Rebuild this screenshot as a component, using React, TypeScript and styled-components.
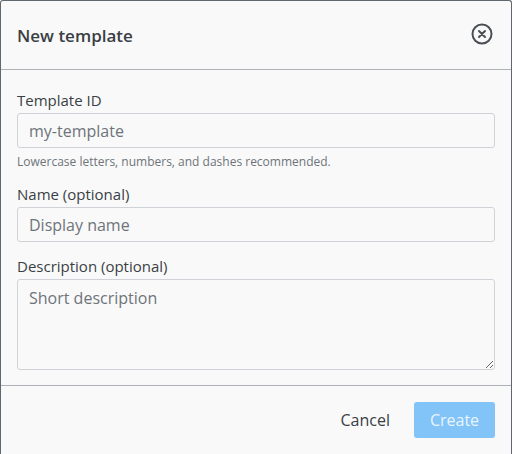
import styled, { createGlobalStyle } from 'styled-components';

const Global = createGlobalStyle`
  body { margin: 0; background: #f9f9f9; font-family: "Open Sans", "Noto Sans", sans-serif; }
`;

const Dialog = styled.div`
  width: 512px;
  height: 454px;
  box-sizing: border-box;
  border: 1px solid #5f6770;
  border-bottom: none;
  border-radius: 3px 3px 0 0;
  background: #f9f9f9;
  display: flex;
  flex-direction: column;
`;

const Header = styled.div`
  height: 71px;
  display: flex;
  align-items: center;
  justify-content: space-between;
  padding: 0 16px 0 16px;
  border-bottom: 1px solid #aeb2b8;
`;

const Title = styled.h2`
  margin: 0;
  font-size: 17px;
  font-weight: 600;
  color: #3a3f45;
`;

const CloseButton = styled.button`
  background: none;
  border: none;
  padding: 0;
  width: 26px;
  height: 26px;
  display: flex;
  align-items: center;
  justify-content: center;
  color: #4a4f55;
  margin-top: -2px;
`;

const Body = styled.div`
  padding: 20px 16px 15px;
  border-bottom: 1px solid #aeb2b8;
  display: flex;
  flex-direction: column;
`;

const Label = styled.label`
  font-size: 15px;
  color: #3a3f45;
  margin-bottom: 3px;
  line-height: 20px;
`;

const Input = styled.input`
  box-sizing: border-box;
  height: 35px;
  width: 100%;
  border: 1px solid #cfd3d8;
  border-radius: 3px;
  background: #f9f9f9;
  padding: 0 11px;
  font: inherit;
  font-size: 16px;
  color: #3a3f45;
  &::placeholder { color: #6e747a; }
`;

const TextArea = styled.textarea`
  box-sizing: border-box;
  height: 91px;
  width: 100%;
  border: 1px solid #cfd3d8;
  border-radius: 3px;
  background: #f9f9f9;
  padding: 7px 11px;
  font: inherit;
  font-size: 16px;
  display: block;
  &::placeholder { color: #6e747a; }
`;

const Hint = styled.div`
  font-size: 12px;
  color: #6e747a;
  margin: 5px 0 14px;
`;

const Field = styled.div<{ $gap?: number }>`
  display: flex;
  flex-direction: column;
  margin-bottom: ${(p) => p.$gap ?? 0}px;
`;

const Footer = styled.div`
  display: flex;
  justify-content: flex-end;
  align-items: center;
  gap: 24px;
  padding: 16px 16px;
`;

const TextButton = styled.button`
  background: none;
  border: none;
  font: inherit;
  font-size: 16px;
  color: #3a3f45;
  padding: 0;
`;

const PrimaryButton = styled.button`
  background: #82c3f8;
  color: #eaf5fe;
  border: none;
  border-radius: 3px;
  height: 36px;
  width: 81px;
  font: inherit;
  font-size: 16px;
`;

export default function App() {
  return (
    <>
      <Global />
      <Dialog>
        <Header>
          <Title>New template</Title>
          <CloseButton aria-label="Close">
            <svg width="22" height="22" viewBox="0 0 22 22" fill="none" stroke="currentColor" strokeWidth="2" strokeLinecap="round">
              <circle cx="11" cy="11" r="9.5" />
              <path d="M8 8l6 6M14 8l-6 6" />
            </svg>
          </CloseButton>
        </Header>
        <Body>
          <Field>
            <Label>Template ID</Label>
            <Input placeholder="my-template" />
          </Field>
          <Hint>Lowercase letters, numbers, and dashes recommended.</Hint>
          <Field $gap={14}>
            <Label>Name (optional)</Label>
            <Input placeholder="Display name" />
          </Field>
          <Field>
            <Label>Description (optional)</Label>
            <TextArea placeholder="Short description" />
          </Field>
        </Body>
        <Footer>
          <TextButton>Cancel</TextButton>
          <PrimaryButton>Create</PrimaryButton>
        </Footer>
      </Dialog>
    </>
  );
}
